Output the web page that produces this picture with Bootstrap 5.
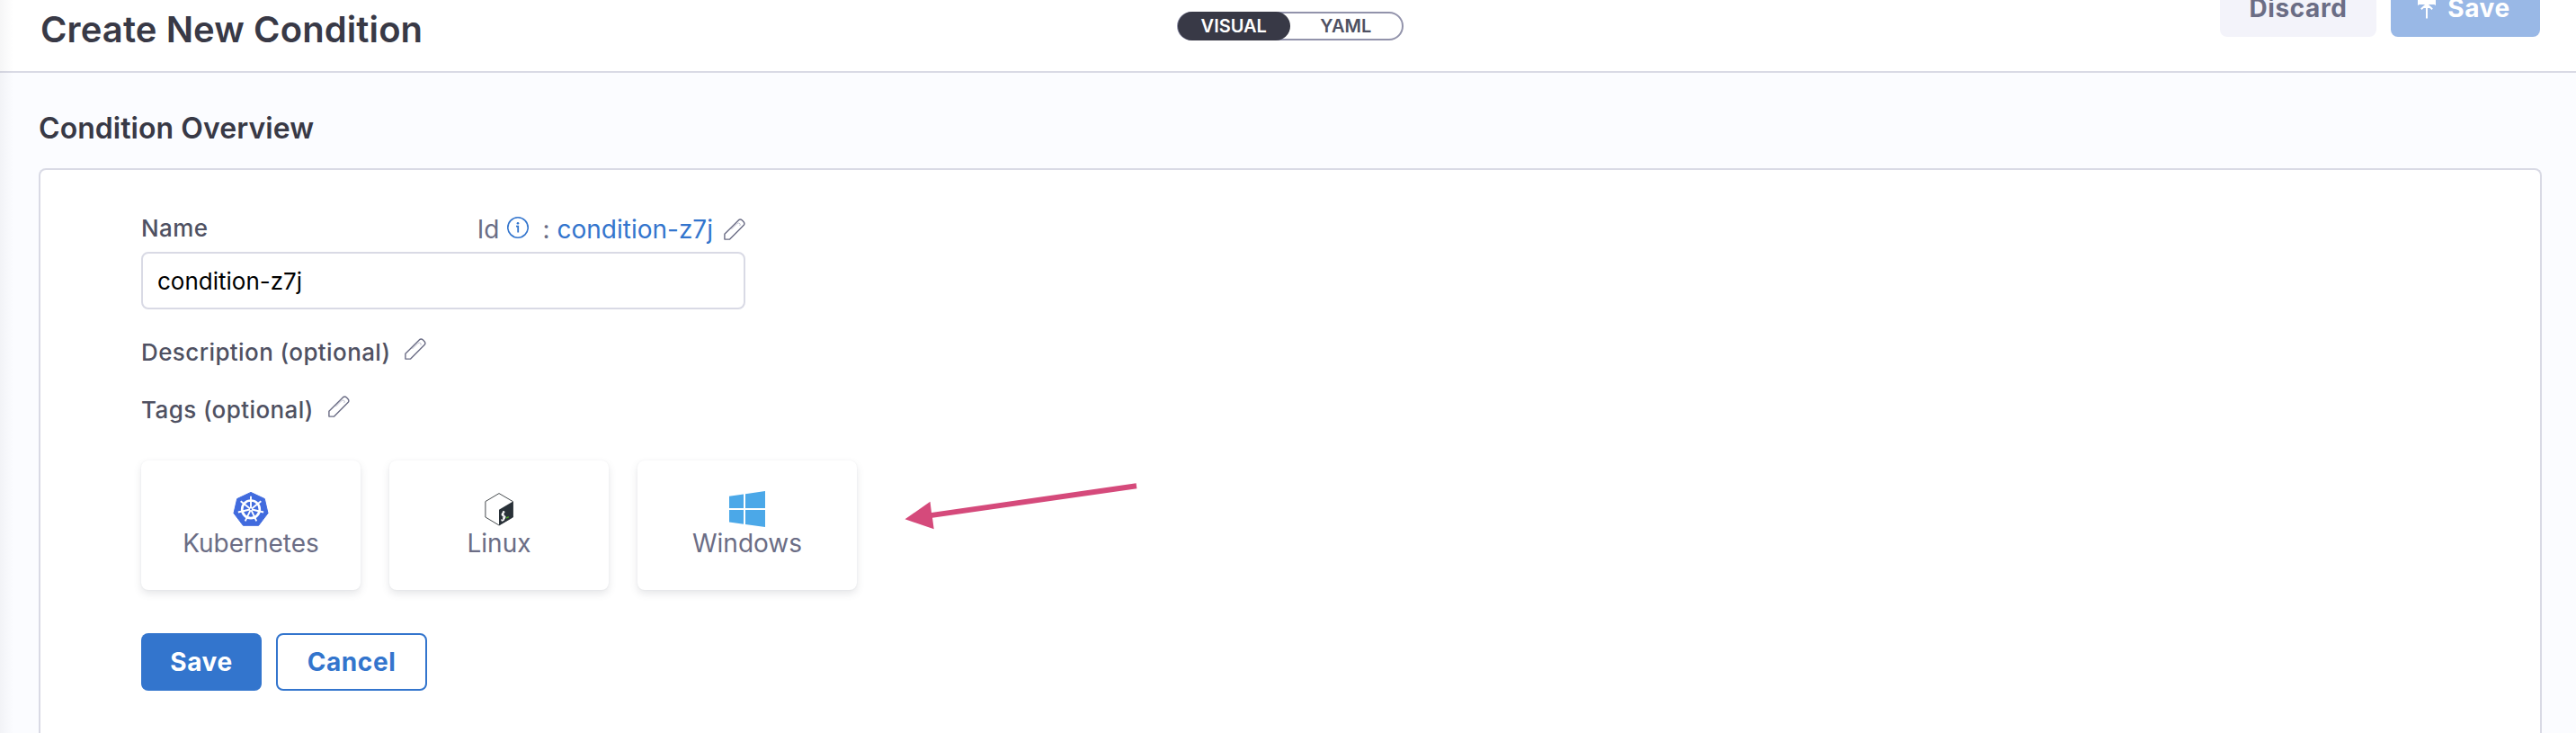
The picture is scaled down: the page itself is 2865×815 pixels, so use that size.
<!DOCTYPE html>
<html lang="en">
<head>
<meta charset="utf-8">
<title>Create New Condition</title>
<link href="https://cdn.jsdelivr.net/npm/bootstrap@5.3.0/dist/css/bootstrap.min.css" rel="stylesheet">
<style>
body{font-family:Inter,"Liberation Sans",sans-serif;background:#fbfcff;color:#383946;height:815px;overflow:hidden}
.edge-shade{position:absolute;left:0;top:0;width:15px;height:815px;background:linear-gradient(90deg,rgba(40,41,61,.045),rgba(40,41,61,0));z-index:2}
.topbar{display:grid;grid-template-columns:1fr auto 1fr;height:81px;padding:0 40px 0 45px;border-bottom:2px solid #d9dae5;background:#fff}
.topbar h1{font-size:40px;font-weight:600;line-height:65px;letter-spacing:.1px}
.view-switch{width:252px;height:32px;margin-top:13px;border:2px solid #9293ab;border-radius:16px;font-size:20px;font-weight:600;color:#4f5162}
.view-switch span{flex:1;text-align:center;line-height:32px;margin:-2px 0;border-radius:16px}
.view-switch .on{background:#383946;color:#fff;margin-left:-1px}
.action{height:64px;border-radius:8px;border:2px solid transparent;padding:0;font-size:28px;font-weight:700;line-height:60px;letter-spacing:.6px}
.topbar .action{margin-top:-23px}
.discard{width:174px;background:#f3f3fa;color:#6b6d85}
.publish{width:166px;background:#99b8e6;color:#fff;padding-right:3px}
.publish svg{margin-right:13px}
.save{width:134px;background:#3375cd;color:#fff}
.cancel{width:168px;border-color:#3375cd;color:#3375cd;background:#fff}
.overview{height:734px;overflow:hidden;padding:31px 38px 0 43px}
.overview h2{font-size:32px;font-weight:600;line-height:61px;margin-bottom:14px;letter-spacing:.05px}
.panel{height:628px;border:2px solid #d9dae5;border-bottom:0;border-radius:8px 8px 0 0;background:#fff;padding:38px 112px 0}
.form-col{width:672px}
.field-head{height:53px}
.field-label{font-size:26px;font-weight:500;color:#4f5162;letter-spacing:.4px}
.ident{font-size:28px;line-height:36px;color:#6b6d85;padding-top:2px}
.ident .val{color:#3375cd}
.name-input{height:64px;border:2px solid #d9dae5;border-radius:8px;padding:0 16px;font-size:26px;color:#000}
.info-mark{margin:-4px 15px 0 9px}
.colon{margin-right:8px}
.ident-edit{margin-left:12px}
.opt-row{height:64px}
.opt-row.first{margin-top:15px}
.opt-row svg{margin:-7px 0 0 16px}
.tiles{margin-top:25px;gap:32px}
.form-actions{margin-top:48px}
.tile{width:244px;height:144px;border-radius:8px;padding-top:34px;background:#fff;box-shadow:0 0 2px rgba(40,41,61,.06),0 4px 8px rgba(96,97,112,.16);font-size:28px;line-height:36px;color:#6b6d85}
svg{display:block;flex:none}
.pointer{position:absolute;left:1000px;top:530px}
</style>
</head>
<body class="position-relative">
<svg width="0" height="0" class="position-absolute"><defs>
<g id="pencil" fill="none" stroke="#6b6d85" stroke-width="1.4" stroke-linejoin="round"><path d="M.9 23.1V17.3L16.3 1.9q2.1-1.8 4.2.2l1.4 1.4q1.9 2.1.1 4.1L6.6 23.1Z"/><path d="M8.3 12.1 14.6 5.8q2-1.8 3.5.1Q18.8 7 17.6 8" stroke-width=".8" stroke="#b0b1c4"/></g>
</defs></svg>
<div class="edge-shade"></div>
<header class="topbar">
  <h1 class="m-0">Create New Condition</h1>
  <div class="view-switch d-flex"><span class="on">VISUAL</span><span>YAML</span></div>
  <div class="d-flex justify-content-end align-items-start gap-3">
    <button class="btn action discard">Discard</button>
    <button class="btn action publish d-flex align-items-center justify-content-center"><svg width="20" height="32" viewBox="0 0 20 32"><path d="M0 0H20V12.8H18.8V12H1.2V12.8H0Z" fill="#fff"/><path d="M10 11.2V27.6M3.8 17.2 10 11.6 16.2 17.2" fill="none" stroke="#fff" stroke-width="2"/><path d="M5.5 16 10 11.2 14.5 16Z" fill="#fff"/></svg>Save</button>
  </div>
</header>
<main class="overview">
  <h2>Condition Overview</h2>
  <section class="panel">
    <div class="form-col">
      <div class="field-head d-flex justify-content-between align-items-center">
        <label class="field-label" for="cname">Name</label>
        <div class="ident d-flex align-items-center">
          <span>Id</span>
          <svg width="24" height="24" viewBox="0 0 24 24" class="info-mark"><circle cx="12" cy="12" r="11.2" fill="none" stroke="#3375cd" stroke-width="1.6"/><circle cx="12" cy="7.2" r="1.3" fill="#3375cd"/><path d="M10 10.6H12.2V17.4" fill="none" stroke="#3375cd" stroke-width="1.8"/></svg>
          <span class="colon">:</span><span class="val">condition-z7j</span>
          <svg width="24" height="24" class="ident-edit"><use href="#pencil"/></svg>
        </div>
      </div>
      <input id="cname" class="name-input form-control" value="condition-z7j">
      <div class="opt-row first d-flex align-items-center"><span class="field-label">Description (optional)</span><svg width="24" height="24"><use href="#pencil"/></svg></div>
      <div class="opt-row d-flex align-items-center"><span class="field-label">Tags (optional)</span><svg width="24" height="24"><use href="#pencil"/></svg></div>
    </div>
    <div class="tiles d-flex">
      <div class="tile d-flex flex-column align-items-center">
        <svg width="40" height="40" viewBox="0 0 40 40"><path d="M20 1.4 35.3 8.6 39 24.6 28.6 38.3H11.4L1 24.6 4.7 8.6Z" fill="#416bde" stroke="#416bde" stroke-linejoin="round"/><g fill="none" stroke="#fff"><circle cx="20" cy="20.3" r="9.8" stroke-width="2.7"/><g stroke-width="1.9"><path id="spoke" d="M20 20.3V5.8"/><use href="#spoke" transform="rotate(51.43 20 20.3)"/><use href="#spoke" transform="rotate(102.86 20 20.3)"/><use href="#spoke" transform="rotate(154.29 20 20.3)"/><use href="#spoke" transform="rotate(205.71 20 20.3)"/><use href="#spoke" transform="rotate(257.14 20 20.3)"/><use href="#spoke" transform="rotate(308.57 20 20.3)"/></g></g><circle cx="20" cy="20.3" r="1" fill="#416bde"/></svg>
        <span>Kubernetes</span>
      </div>
      <div class="tile d-flex flex-column align-items-center">
        <svg width="40" height="40" viewBox="0 0 40 40"><path d="M20 2.6 35.4 11.6V29L20 38 4.9 29V11.6Z" fill="#fff" stroke="#464b4e" stroke-linejoin="round"/><path d="M20 20.8 35.6 11.6V29L20 38.2Z" fill="#293138"/><path d="M26.4 23.2Q23.7 23.6 23.3 25.6T25.5 27.6 25.6 31.2 22.8 31.4M24.9 22.1V33" fill="none" stroke="#fff" stroke-width="1.4"/><path d="M28 30.2 30.8 28.6" stroke="#4da925" stroke-width="1.4"/></svg>
        <span>Linux</span>
      </div>
      <div class="tile d-flex flex-column align-items-center">
        <svg width="40" height="40" viewBox="0 0 40 40" fill="#4ba8e8"><path d="M0 5.7 16 3.5V19H0ZM18 3.2 40 0V19H18ZM0 21H16V36.7L0 34.5ZM18 21H40V40L18 37Z"/></svg>
        <span>Windows</span>
      </div>
    </div>
    <div class="form-actions d-flex gap-3">
      <button class="btn action save">Save</button>
      <button class="btn action cancel">Cancel</button>
    </div>
  </section>
</main>
<svg class="pointer" width="270" height="64" viewBox="1000 530 270 64" fill="#d54a7b"><path d="M1006.5 577.3 1034.5 557.7 1036 570 1263.6 537.3 1264.4 543.3 1037 575.7 1038.7 588.2Z"/></svg>
<script src="https://cdn.jsdelivr.net/npm/bootstrap@5.3.0/dist/js/bootstrap.bundle.min.js"></script>
</body>
</html>
